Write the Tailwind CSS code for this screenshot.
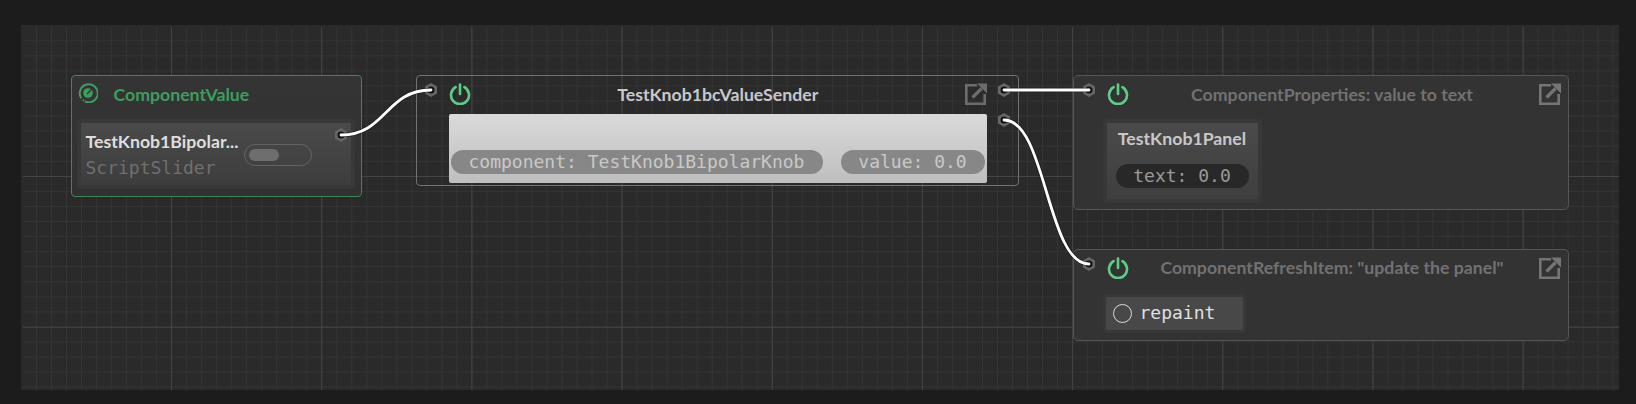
<!DOCTYPE html>
<html lang="en">
<head>
  <meta charset="UTF-8" />
  <title>DspNetwork graph</title>
  <script src="https://cdn.jsdelivr.net/npm/@tailwindcss/browser@4"></script>
</head>
<body class="bg-[#1c1c1c] w-[1636px] h-[404px] pt-[25px] pl-[21px] overflow-hidden relative font-['Lato',sans-serif]">

  <!-- Canvas -->
  <main class="relative w-[1598px] h-[365px] bg-[#2a2a2a]">
    <!-- Grid lines: inset so no line falls on the canvas edge -->
    <div class="absolute left-[2px] top-[2px] right-0 bottom-0 [background-image:linear-gradient(#444444_1px,transparent_1px),linear-gradient(90deg,#444444_1px,transparent_1px),linear-gradient(#343434_1px,transparent_1px),linear-gradient(90deg,#343434_1px,transparent_1px)] [background-size:150.7px_150.7px,150.2px_150.2px,15.07px_15.07px,15.02px_15.02px] [background-position:0_149px,148px_0,0_13.3px,13px_0]"></div>

    <!-- ComponentValue -->
    <section class="absolute left-[50px] top-[50px] w-[291px] h-[122px] border-[1.5px] border-[#3f8557] rounded-[4px] bg-linear-to-b from-[#343434] to-[#313131]">
      <header class="h-[42.5px] pb-[8.5px] pl-[5.5px] flex items-center gap-[16px]">
        <svg class="w-[20px] h-[20px]" viewBox="0 0 20 20" fill="none" stroke="#3f9c5f" stroke-width="2">
          <path d="M3.2 15.2A9 9 0 1 1 7 18.5" />
          <path d="M4.800 18L6 16.500" stroke-width="1.500" />
          <circle cx="10" cy="10" r="4.800" fill="#3f9c5f" stroke="none" />
          <path d="M9 11L14.500 5.500" stroke="#343434" stroke-width="1.400" />
        </svg>
        <h2 class="mt-[3px] text-[#3f9c5f] font-bold text-[17.7px] leading-none">ComponentValue</h2>
      </header>
      <div class="ml-[4.5px] w-[278px] h-[70px] border-[4px] border-[#383838] rounded-[4px] bg-linear-to-b from-[#4a4a4a] to-[#3d3d3d] flex items-center pl-[5px]">
        <div class="w-[156px] shrink-0 pt-[4px]">
          <p class="text-[#dedede] font-bold text-[17.7px] leading-[20px] whitespace-nowrap">TestKnob1Bipolar...</p>
          <p class="text-[#6f6f6f] font-['DejaVu_Sans_Mono',monospace] text-[18px] leading-[22px] mt-[5px]">ScriptSlider</p>
        </div>
        <div class="ml-[2px] mt-[3px] w-[68px] h-[22px] border-[1.5px] border-[#636363] rounded-full flex items-center pl-[4px]">
          <span class="block w-[30px] h-[12px] rounded-full bg-[#6e6e6e]"></span>
        </div>
      </div>
    </section>

    <!-- TestKnob1bcValueSender -->
    <section class="absolute left-[395px] top-[50px] w-[603px] h-[111px] border-[1.5px] border-[#727272] rounded-[4px]">
      <header class="h-[37.5px] pb-[2.5px] pl-[31.5px] w-[570px] flex items-center">
        <svg class="w-[22px] h-[22px] shrink-0" viewBox="0 0 22 22" fill="none" stroke="#5fcb88" stroke-width="2.6" stroke-linecap="round">
          <path d="M6.6 4.2A9 9 0 1 0 15.4 4.2" />
          <path d="M11 1.6V11" />
        </svg>
        <h2 class="flex-1 mt-[2px] text-center text-[#c8c8c8] font-bold text-[17.7px] leading-none">TestKnob1bcValueSender</h2>
        <svg class="w-[22px] h-[22px] shrink-0" viewBox="0 0 22 22" fill="none" stroke="#6c6c6c" stroke-width="2.600">
          <path d="M12 2.300H1.300V20.700H19.700V11" />
          <path d="M7.500 14.500L16.500 5.500" stroke-width="3.200" />
          <path d="M12 0.500H22V10.500Z" fill="#6c6c6c" stroke="none" />
        </svg>
      </header>
      <div class="ml-[31.5px] w-[538px] h-[69px] rounded-[2px] bg-linear-to-b from-[#dadada] to-[#bebebe] flex items-end justify-between px-[2px] pb-[9px] font-['DejaVu_Sans_Mono',monospace] text-[18px] text-[#c9c9c9]">
        <span class="w-[372px] h-[24px] leading-[24px] rounded-full bg-[#878787] text-center">component: TestKnob1BipolarKnob</span>
        <span class="w-[144px] h-[24px] leading-[24px] rounded-full bg-[#878787] text-center">value: 0.0</span>
      </div>
    </section>

    <!-- ComponentProperties -->
    <section class="absolute left-[1052px] top-[50px] w-[496px] h-[135px] border-[1.5px] border-[#565656] rounded-[5px] bg-[#333333]">
      <header class="h-[42.5px] pb-[7.5px] pl-[32.5px] pr-[7.5px] flex items-center">
        <svg class="w-[22px] h-[22px] shrink-0" viewBox="0 0 22 22" fill="none" stroke="#5fcb88" stroke-width="2.6" stroke-linecap="round">
          <path d="M6.6 4.2A9 9 0 1 0 15.4 4.2" />
          <path d="M11 1.6V11" />
        </svg>
        <h2 class="flex-1 mt-[2px] -ml-[3px] text-center text-[#717171] font-bold text-[17.7px] leading-none">ComponentProperties: value to text</h2>
        <svg class="w-[22px] h-[22px] shrink-0" viewBox="0 0 22 22" fill="none" stroke="#757575" stroke-width="2.600">
          <path d="M12 2.300H1.300V20.700H19.700V11" />
          <path d="M7.500 14.500L16.500 5.500" stroke-width="3.200" />
          <path d="M12 0.500H22V10.500Z" fill="#757575" stroke="none" />
        </svg>
      </header>
      <div class="ml-[28.5px] w-[159px] h-[84px] border-[4px] border-[#383838] rounded-[4px] bg-linear-to-b from-[#4a4a4a] to-[#3f3f3f] flex flex-col items-center">
        <p class="mt-[5px] text-[#c8c8c8] font-bold text-[17.7px] leading-[22px]">TestKnob1Panel</p>
        <span class="mt-[14px] w-[133px] h-[24px] leading-[24px] rounded-full bg-[#282828] text-center font-['DejaVu_Sans_Mono',monospace] text-[18px] text-[#9a9a9a]">text: 0.0</span>
      </div>
    </section>

    <!-- ComponentRefreshItem -->
    <section class="absolute left-[1052px] top-[224px] w-[496px] h-[92px] border-[1.5px] border-[#565656] rounded-[5px] bg-[#333333]">
      <header class="h-[43.5px] pb-[8.5px] pl-[32.5px] pr-[7.5px] flex items-center">
        <svg class="w-[22px] h-[22px] shrink-0" viewBox="0 0 22 22" fill="none" stroke="#5fcb88" stroke-width="2.6" stroke-linecap="round">
          <path d="M6.6 4.2A9 9 0 1 0 15.4 4.2" />
          <path d="M11 1.6V11" />
        </svg>
        <h2 class="flex-1 -ml-[3px] text-center text-[#717171] font-bold text-[17.7px] leading-none">ComponentRefreshItem: "update the panel"</h2>
        <svg class="w-[22px] h-[22px] shrink-0" viewBox="0 0 22 22" fill="none" stroke="#757575" stroke-width="2.600">
          <path d="M12 2.300H1.300V20.700H19.700V11" />
          <path d="M7.500 14.500L16.500 5.500" stroke-width="3.200" />
          <path d="M12 0.500H22V10.500Z" fill="#757575" stroke="none" />
        </svg>
      </header>
      <div class="ml-[28.5px] w-[143px] h-[39px] border-[3px] border-[#383838] rounded-[4px] bg-[#484848] flex items-center pl-[7px] gap-[8px]">
        <span class="block w-[19px] h-[19px] rounded-full border-[1.5px] border-[#dcdcdc]"></span>
        <span class="font-['DejaVu_Sans_Mono',monospace] text-[18px] text-[#e0e0e0] leading-none">repaint</span>
      </div>
    </section>
  </main>

  <!-- Wires and ports, in page coordinates -->
  <svg class="absolute left-0 top-0 w-[1636px] h-[404px] pointer-events-none" viewBox="0 0 1636 404" fill="none">
    <g fill="#666666">
      <polygon points="341,128 347,131.500 347,138.500 341,142 335,138.500 335,131.500" />
      <polygon points="431,83 437,86.500 437,93.500 431,97 425,93.500 425,86.500" />
      <polygon points="1004,83 1010,86.500 1010,93.500 1004,97 998,93.500 998,86.500" />
      <polygon points="1004,113 1010,116.500 1010,123.500 1004,127 998,123.500 998,116.500" />
      <polygon points="1089,83 1095,86.500 1095,93.500 1089,97 1083,93.500 1083,86.500" />
      <polygon points="1089,257 1095,260.500 1095,267.500 1089,271 1083,267.500 1083,260.500" />
    </g>
    <g fill="#111111">
      <circle cx="341" cy="135" r="3.5" />
      <circle cx="431" cy="90" r="3.5" />
      <circle cx="1004" cy="90" r="3.5" />
      <circle cx="1004" cy="120" r="3.5" />
      <circle cx="1089" cy="90" r="3.5" />
      <circle cx="1089" cy="264" r="3.5" />
    </g>
    <g stroke="#161616" stroke-width="4.500" opacity="0.6">
      <path d="M341 135C386 135 386 90 431 90" />
      <path d="M1004 90H1089" />
      <path d="M1004 120C1046 120 1047 264 1089 264" />
    </g>
    <g stroke="#ffffff" stroke-width="2.800" stroke-linecap="round">
      <path d="M341 135C386 135 386 90 431 90" />
      <path d="M1004 90H1089" />
      <path d="M1004 120C1046 120 1047 264 1089 264" />
    </g>
  </svg>
</body>
</html>
